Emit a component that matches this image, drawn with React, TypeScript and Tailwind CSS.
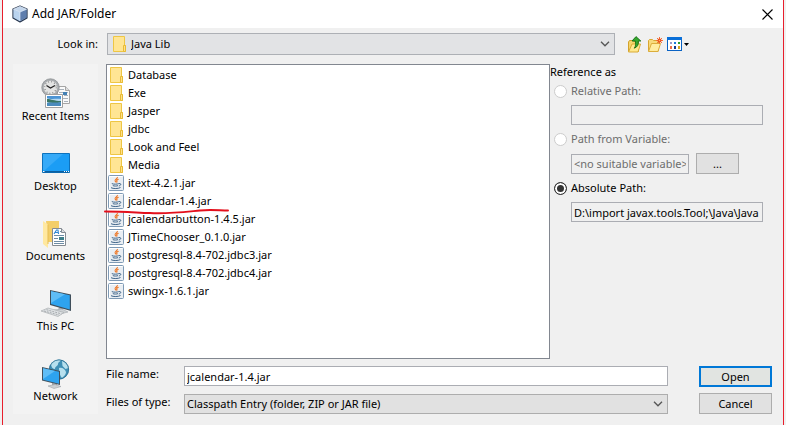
import { useState, type ReactNode } from "react";

const uiFont = "font-['Noto_Sans','Open_Sans',sans-serif]";

function CubeIcon() {
  return (
    <svg width="16" height="18" viewBox="0 0 16 18" aria-hidden="true">
      <path d="M8 1 15 4v9l-7 4-7-4V4z" fill="#8fa9cf" stroke="#27364d" strokeWidth="1.2" strokeLinejoin="round" />
      <path d="M8 1.4 14.6 4.2 8 7 1.4 4.2z" fill="#c3d6ec" />
      <path d="M1.5 4.5 8 7.2V16l-6.5-3.4z" fill="#b9d3ee" />
      <path d="M14.5 4.5 8 7.2V16l6.5-3.4z" fill="#5f7ead" />
      <path d="M8 1.4 14.6 4.2 8 7 1.4 4.2z M8 7v9" fill="none" stroke="#e9f2fb" strokeWidth=".6" />
    </svg>
  );
}

function FolderIcon() {
  return (
    <svg className="shrink-0" width="16" height="18" viewBox="0 0 16 18" aria-hidden="true">
      <path d="M2.5 1.5h11v9h1v6h-12z" fill="#ffe594" stroke="#eec644" />
      <path d="M12.5 10.5h2v6h-2z" fill="#ffe08a" stroke="#e8bb35" />
    </svg>
  );
}

function JarIcon() {
  return (
    <svg className="shrink-0" width="16" height="16" viewBox="0 0 16 16" aria-hidden="true">
      <rect x=".5" y=".5" width="15" height="15" rx="1" fill="#e9eef3" stroke="#7f9ab5" />
      <path d="M1.500 14.500v-13h13" fill="none" stroke="#fff" />
      <path d="M9.300 2c1 1.600-3 2.300-2.200 4 .3.500.8.800.9 1.300M10.600 4.200c-1.800.6-2.300 1.300-1.700 2.100.3.400.1.800-.2 1.200" fill="none" stroke="#ee7420" strokeWidth="1.100" />
      <path d="M3.800 8.600c1.800.8 5.400.7 7 0M4.800 10.600c1.500.6 4 .6 5.200 0M11 8.600c2.300-.6 2.500 1.800-.2 2.400M3 12.700c2 1.200 7.600 1.100 9.500-.2" fill="none" stroke="#3f6488" strokeWidth="1" />
    </svg>
  );
}

function Chevron() {
  return (
    <svg className="pointer-events-none absolute top-1/2 right-[5px] -translate-y-1/2" width="10" height="6" viewBox="0 0 10 6" aria-hidden="true">
      <path d="M1 .8 5 4.800 9 .8" fill="none" stroke="#555" strokeWidth="1.300" />
    </svg>
  );
}

function UpFolderIcon() {
  return (
    <svg width="16" height="17" viewBox="0 0 16 17" aria-hidden="true">
      <path d="M1.500 15.500V6l1-1.500h3l1 1h5v10z" fill="#f5d56c" stroke="#d3a22b" />
      <path d="m1.500 16 3.500-8h8.500l-2.500 8z" fill="#ffe88e" stroke="#d9ab36" />
      <path d="M9 .6 13.800 5h-2.500c.4 3.400-.7 6-4 7.200C8.800 10 8.900 7.800 8.300 5H5z" fill="#35a82e" stroke="#176f15" strokeWidth=".9" strokeLinejoin="round" />
    </svg>
  );
}

function NewFolderIcon() {
  return (
    <svg width="16" height="17" viewBox="0 0 16 17" aria-hidden="true">
      <path d="M1.500 15V4.500l1-1h3l1 1h5V15z" fill="#f7da7c" stroke="#d9a730" />
      <path d="m1.500 15.500 3-8h9l-2.500 8z" fill="#ffeca0" stroke="#dbad3b" />
      <path d="M12.500 1v7M9 4.500h7M10 2l5 5M15 2l-5 5" stroke="#f4733a" strokeWidth="1" />
      <circle cx="12.500" cy="4.500" r="2" fill="#ee4a1c" />
      <circle cx="12.500" cy="4.500" r=".8" fill="#ffb85c" />
    </svg>
  );
}

function ViewIcon() {
  return (
    <svg width="23" height="16" viewBox="0 0 23 16" aria-hidden="true">
      <rect x=".5" y="1.500" width="14" height="13" fill="#fff" stroke="#0a63c4" />
      <path d="M0 1h15v3H0z" fill="#0a6fd8" />
      <path d="M3 6h2v2H3z" fill="#9a9aca" />
      <path d="M7 6h2v2H7z" fill="#1d7be0" />
      <path d="M11 6h2v2h-2z" fill="#2c9c2c" />
      <path d="M3 10h2v3H3z" fill="#f0704a" />
      <path d="M7 10h2v3H7z" fill="#153a8c" />
      <path d="M11 10h2v3h-2z" fill="#d9a520" />
      <path d="M17 7h5l-2.500 3z" fill="#000" />
    </svg>
  );
}

function RecentIcon() {
  return (
    <svg width="32" height="32" viewBox="0 0 32 32" aria-hidden="true">
      <path d="M17.500 8.500h8l4 4v13h-12z" fill="#fafafa" stroke="#a5a5a5" />
      <path d="M25.500 8.500v4h4" fill="#ddd" stroke="#a5a5a5" />
      <path d="M19 11.500h5M19 14.500h9M19 20.500h9M24 17.500h4M24 23.500h4" stroke="#a9b2bb" />
      <path d="M23 14h4v3h-4z" fill="#4381b5" />
      <circle cx="10.500" cy="9.500" r="8.700" fill="#a9adb0" stroke="#8b8f92" strokeWidth=".8" />
      <circle cx="10.500" cy="9.500" r="6.800" fill="#e3e4e3" />
      <circle cx="10.500" cy="9.500" r="5.800" fill="none" stroke="#777" strokeWidth="1.200" strokeDasharray=".8 2.240" />
      <path d="m6.500 7.500 4 2.500 4.500-2.500" fill="none" stroke="#222" strokeWidth="1.200" />
      <path d="M5.500 16.500h17v13h-17z" fill="#fff" stroke="#a0a0a0" />
      <path d="M7 18h14v10H7z" fill="#b3d8f2" />
      <path d="M7 18h14v3c-5-1-9 1-14-1z" fill="#4b94d4" />
      <path d="M7 21c4 0 7 2 14 2v1c-5 2-10 1-14 0z" fill="#3a7664" />
      <path d="M7 25c5-1 9 0 14-1v4H7z" fill="#4b8bbd" />
    </svg>
  );
}

function DesktopIcon() {
  return (
    <svg width="32" height="32" viewBox="0 0 32 32" aria-hidden="true">
      <path d="M2.500 5.500h27v19h-27z" fill="#1b9df5" stroke="#0d72bd" />
      <path d="M3 6h20L5 22H3z" fill="#36aaf8" />
      <path d="M3 23h26v1.500H3z" fill="#0d5f9f" />
      <path d="M3 23h1.500v1H3zM24 23h1v1h-1zM26 23h1v1h-1zM28 23h1v1h-1z" fill="#fff" />
    </svg>
  );
}

function DocumentsIcon() {
  return (
    <svg width="32" height="32" viewBox="0 0 32 32" aria-hidden="true">
      <path d="M7 3h13v21H9z" fill="#f3ce69" />
      <path d="m4 3 5 3.500V30l-5-4z" fill="#ffe8a0" />
      <path d="M9 6.500V26" stroke="#e6bd53" />
      <path d="M13.500 10.500h9l4 4v13h-13z" fill="#fff" stroke="#848b92" />
      <path d="M22.500 10.500v4h4" fill="#d9dde1" stroke="#848b92" />
      <path d="m15 16 2.500-4H19l.5 4M16 14.500h3" fill="none" stroke="#2e86d3" strokeWidth="1.100" />
      <path d="M21 13.500h1M15 17.500h10M15 20.500h4M15 23.500h10M15 25.500h10" stroke="#6d8ca5" />
      <path d="M20 19h5v3h-5z" fill="#3d7f8a" />
    </svg>
  );
}

function ThisPcIcon() {
  return (
    <svg width="32" height="32" viewBox="0 0 32 32" aria-hidden="true">
      <path d="m19 19 4 1.500v3l-5-1.500z" fill="#a7adb2" />
      <path d="m14 22 8-1 6 3-8 2z" fill="#cdd1d4" stroke="#a3a8ac" strokeWidth=".6" />
      <path d="m10 2 21 4.500V23L10 17z" fill="#3f4e5a" />
      <path d="m11 3.200 18.800 4v14.200L11 16z" fill="#2ea3ef" />
      <path d="m11 3.200 14 3L11 15z" fill="#5fbdf6" />
      <path d="m1 23 7-3 16 4.500-6 4z" fill="#dfe2e4" stroke="#a9adb0" strokeWidth=".7" />
      <path d="m4 23 15 4M6.500 21.700l15 4.200" stroke="#a1a6aa" strokeWidth=".9" strokeDasharray="2 1" />
    </svg>
  );
}

function NetworkIcon() {
  return (
    <svg width="32" height="32" viewBox="0 0 32 32" aria-hidden="true">
      <circle cx="20" cy="11.500" r="10" fill="#3f8fb5" />
      <path d="M12 6c2-4 8-5 10-4-1 2-3 2-3 4s-3 2-3 5c-2 0-4-2-4-5zM23 3c3 1 6 4 6.500 7l-3 1-3-3zM20 10c3-1 6 1 7 4 0 3-3 5-4 6-2-2-3-6-3-10z" fill="#b7e0ee" />
      <circle cx="20" cy="11.500" r="9.600" fill="none" stroke="#2c6d8e" strokeWidth=".8" />
      <path d="m13 25 5 1v3l-5-1z" fill="#9aa1a7" />
      <path d="m9 28 7-1.500 6 2-7 2z" fill="#ccd0d3" stroke="#a0a5a9" strokeWidth=".6" />
      <path d="m3 9 18 4v14L3 22.500z" fill="#42515c" />
      <path d="m4 10.200 16 3.600v11.900L4 21.700z" fill="#2ea3ef" />
      <path d="m4 10.200 12 2.700L4 21z" fill="#5fbdf6" />
    </svg>
  );
}

const places: { label: string; icon: ReactNode }[] = [
  { label: "Recent Items", icon: <RecentIcon /> },
  { label: "Desktop", icon: <DesktopIcon /> },
  { label: "Documents", icon: <DocumentsIcon /> },
  { label: "This PC", icon: <ThisPcIcon /> },
  { label: "Network", icon: <NetworkIcon /> },
];

const folders = ["Database", "Exe", "Jasper", "jdbc", "Look and Feel", "Media"];
const jars = [
  "itext-4.2.1.jar",
  "jcalendar-1.4.jar",
  "jcalendarbutton-1.4.5.jar",
  "JTimeChooser_0.1.0.jar",
  "postgresql-8.4-702.jdbc3.jar",
  "postgresql-8.4-702.jdbc4.jar",
  "swingx-1.6.1.jar",
];

function Radio({ id, label, checked, disabled }: { id: string; label: string; checked?: boolean; disabled?: boolean }) {
  return (
    <div className="flex h-4 items-center gap-1">
      <input
        id={id}
        type="radio"
        name="reference"
        defaultChecked={checked}
        disabled={disabled}
        className="size-[13px] appearance-none rounded-full border border-[#333] bg-white checked:bg-[#333] checked:shadow-[inset_0_0_0_2px_#fff] disabled:border-[#ccc]"
      />
      <label htmlFor={id} className={disabled ? "text-[#6d6d6d]" : "text-black"}>
        {label}
      </label>
    </div>
  );
}

export default function App() {
  const [fileName, setFileName] = useState("jcalendar-1.4.jar");

  return (
    <div className={`flex min-h-screen bg-[#f0f0f0] px-[2px] text-[11px] leading-4 text-black ${uiFont}`}>
      <div className="flex min-w-0 flex-1 flex-col border-x border-[#e81e2c]">
        <header className="flex h-7 items-center gap-1 bg-white pr-[10px] pl-[9px]">
          <CubeIcon />
          <h1 className="flex-1 text-[12px]">Add JAR/Folder</h1>
          <button aria-label="Close">
            <svg width="11" height="11" viewBox="0 0 11 11" aria-hidden="true">
              <path d="m.5.5 10 10m0-10-10 10" stroke="#000" strokeWidth="1.100" />
            </svg>
          </button>
        </header>

        <main className="flex flex-1 flex-col gap-[9px] pt-[5px] pr-[11px] pb-[11px] pl-[10px]">
          <div className="flex items-center">
            <label htmlFor="look-in" className="w-[94px] pr-[9px] text-right">
              Look in:
            </label>
            <div className="relative h-[22px] flex-1">
              <span className="pointer-events-none absolute top-[2px] left-1">
                <FolderIcon />
              </span>
              <select id="look-in" className="size-full appearance-none border border-[#adb0b5] bg-[#e2e3e5] pl-[23px]">
                <option>Java Lib</option>
              </select>
              <Chevron />
            </div>
            <div className="flex w-[157px] items-center gap-1 pl-3">
              <button aria-label="Up one level"><UpFolderIcon /></button>
              <button aria-label="Create new folder"><NewFolderIcon /></button>
              <button aria-label="View menu"><ViewIcon /></button>
            </div>
          </div>

          <div className="flex flex-1 gap-2">
            <nav className="flex w-[85px] shrink-0 flex-col items-center gap-6 bg-[#f3f3f3] pt-[14px] pb-[10px]">
              {places.map((place) => (
                <button key={place.label} className="flex h-[46px] flex-col items-center whitespace-nowrap">
                  {place.icon}
                  <span className="leading-3">{place.label}</span>
                </button>
              ))}
            </nav>

            <div className="flex min-w-0 flex-1 flex-col gap-[7px]">
              <div className="flex flex-1">
                <ul className="relative min-w-0 flex-1 border border-[#828790] bg-white p-px">
                  {folders.map((name) => (
                    <li key={name} className="flex h-[18px] items-center gap-1">
                      <FolderIcon />
                      {name}
                    </li>
                  ))}
                  {jars.map((name) => (
                    <li key={name} className="flex h-[18px] items-center gap-1">
                      <JarIcon />
                      {name}
                    </li>
                  ))}
                  <svg className="absolute top-[143px] -left-[3px]" width="126" height="10" viewBox="0 0 126 10" aria-hidden="true">
                    <path d="M1 3.500c20 0 30 1 45 1.500 18 1 34-1 50-2.500 10-1 20 0 28 0" fill="none" stroke="#e3101c" strokeWidth="2" strokeLinecap="round" />
                  </svg>
                </ul>

                <fieldset className="w-[222px] shrink-0">
                  <legend className="h-[19px] leading-[15px]">Reference as</legend>
                  <div className="flex flex-col gap-[6px] pr-[9px] pl-1">
                    <Radio id="relative" label="Relative Path:" disabled />
                    <input aria-label="Relative path" disabled className="ml-[17px] h-5 border border-[#abadb3] bg-[#f0f0f0] px-[2px]" />
                    <Radio id="variable" label="Path from Variable:" disabled />
                    <div className="ml-[17px] flex items-center gap-[7px]">
                      <input
                        aria-label="Path variable"
                        disabled
                        defaultValue="<no suitable variable>"
                        className="h-5 w-[118px] border border-[#abadb3] bg-[#f0f0f0] px-[2px] text-[#6d6d6d]"
                      />
                      <button className="h-[21px] w-[43px] border border-[#adadad] bg-[#e1e1e1]">...</button>
                    </div>
                    <Radio id="absolute" label="Absolute Path:" checked />
                    <input
                      aria-label="Absolute path"
                      readOnly
                      defaultValue="D:\import javax.tools.Tool;\Java\Java"
                      className="ml-[17px] h-5 border border-[#abadb3] bg-[#f0f0f0] px-[2px]"
                    />
                  </div>
                </fieldset>
              </div>

              <div className="flex gap-[31px]">
                <div className="grid flex-1 grid-cols-[78px_1fr] gap-y-2">
                  <label htmlFor="file-name">File name:</label>
                  <input
                    id="file-name"
                    value={fileName}
                    onChange={(event) => setFileName(event.target.value)}
                    className="h-5 min-w-0 border border-[#abadb3] bg-white px-[2px]"
                  />
                  <label htmlFor="file-type">Files of type:</label>
                  <div className="relative h-5">
                    <select id="file-type" className="size-full appearance-none border border-[#adadad] bg-[#e1e1e1] px-[2px]">
                      <option>Classpath Entry (folder, ZIP or JAR file)</option>
                    </select>
                    <Chevron />
                  </div>
                </div>
                <div className="flex w-[73px] flex-col gap-[6px]">
                  <button className="h-[21px] border-2 border-[#0078d7] bg-[#e1e4e1] leading-4">Open</button>
                  <button className="h-[21px] border border-[#adadad] bg-[#e1e1e1] leading-4">Cancel</button>
                </div>
              </div>
            </div>
          </div>
        </main>
      </div>
    </div>
  );
}
